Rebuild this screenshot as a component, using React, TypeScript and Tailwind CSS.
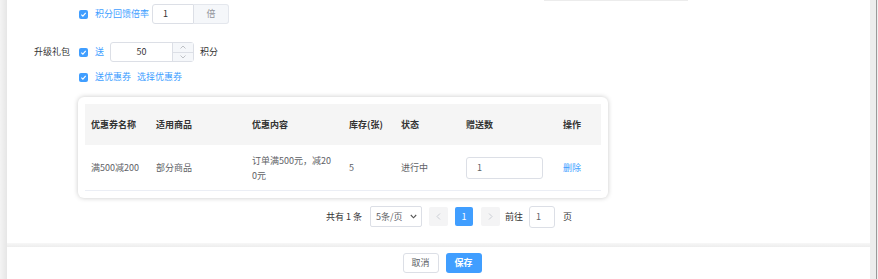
import React from "react";

const font = { fontFamily: '"Noto Sans CJK SC", "Noto Sans", sans-serif' };

const Check = () => (
  <span className="flex h-[9px] w-[9px] items-center justify-center rounded-[2px] bg-[#409eff]">
    <svg width="7" height="7" viewBox="0 0 8 8">
      <path d="M1.5 4.2 L3.3 5.9 L6.5 2.2" fill="none" stroke="#fff" strokeWidth="1.3" />
    </svg>
  </span>
);

const cols = "grid grid-cols-[71px_96px_97px_52px_65px_97px_38px]";

const App: React.FC = () => {
  return (
    <div className="flex h-[279px] w-[878px] bg-white text-[9px] text-[#606266]" style={font}>
      <div className="w-[7px] bg-gradient-to-r from-[#f4f4f4] to-[#e6e6e6]" />
      <div className="flex flex-1 flex-col">
        <div className="relative h-[243px]">
          <div className="absolute left-[537px] top-0 h-px w-[144px] bg-[#ececec]" />
          {/* 积分回馈倍率 */}
          <div className="mt-[4px] flex h-[20px] items-center">
            <div className="w-[72px]" />
            <Check />
            <span className="ml-[7px] text-[#409eff]">积分回馈倍率</span>
            <div className="ml-[3px] flex h-[20px]">
              <div className="flex w-[42px] items-center rounded-l-[3px] border border-[#dcdfe6] pl-[10px] text-[#333]">1</div>
              <div className="flex w-[35px] items-center justify-center rounded-r-[3px] border border-l-0 border-[#e4e7ed] bg-[#f5f7fa] text-[#909399]">倍</div>
            </div>
          </div>
          {/* 升级礼包 */}
          <div className="mt-[18px] flex h-[20px] items-center">
            <div className="w-[63px] text-right text-[#333]">升级礼包</div>
            <div className="w-[9px]" />
            <Check />
            <span className="ml-[7px] text-[#409eff]">送</span>
            <div className="ml-[6px] flex h-[20px] w-[84px] rounded-[3px] border border-[#dcdfe6]">
              <div className="flex flex-1 items-center justify-center text-[#333]">50</div>
              <div className="flex w-[21px] flex-col border-l border-[#dcdfe6] bg-[#f5f7fa]">
                <div className="flex flex-1 items-center justify-center border-b border-[#dcdfe6]">
                  <svg width="6" height="4" viewBox="0 0 6 4"><path d="M0.5 3.5 L3 1 L5.5 3.5" fill="none" stroke="#b0b3b8" strokeWidth="0.8" /></svg>
                </div>
                <div className="flex flex-1 items-center justify-center">
                  <svg width="6" height="4" viewBox="0 0 6 4"><path d="M0.5 0.5 L3 3 L5.5 0.5" fill="none" stroke="#b0b3b8" strokeWidth="0.8" /></svg>
                </div>
              </div>
            </div>
            <span className="ml-[6px] text-[#333]">积分</span>
          </div>
          {/* 送优惠券 */}
          <div className="mt-[5px] flex h-[20px] items-center">
            <div className="w-[72px]" />
            <Check />
            <span className="ml-[7px] text-[#409eff]">送优惠券</span>
            <span className="ml-[6px] text-[#409eff]">选择优惠券</span>
          </div>
          {/* 优惠券表格 */}
          <div className="ml-[71px] mt-[10px] w-[530px] rounded-[6px] bg-white p-[7px] shadow-[0_0_5px_rgba(0,0,0,0.22)]">
            <div className={`${cols} h-[41px] items-center bg-[#f5f5f5] font-bold text-[#333]`}>
              <div className="pl-[6px]">优惠券名称</div>
              <div>适用商品</div>
              <div>优惠内容</div>
              <div>库存(张)</div>
              <div>状态</div>
              <div>赠送数</div>
              <div>操作</div>
            </div>
            <div className={`${cols} h-[46px] items-center border-b border-[#ebeef5] text-[#606266]`}>
              <div className="pl-[6px]">满500减200</div>
              <div>部分商品</div>
              <div className="w-[80px] break-all leading-[15px]">订单满500元，减200元</div>
              <div>5</div>
              <div>进行中</div>
              <div>
                <div className="flex h-[22px] w-[77px] items-center rounded-[3px] border border-[#dcdfe6] pl-[10px]">1</div>
              </div>
              <div className="text-[#409eff]">删除</div>
            </div>
          </div>
          {/* 分页 */}
          <div className="mt-[8px] flex h-[21px] items-center text-[#333]">
            <div className="w-[319px]" />
            <span>共有 1 条</span>
            <div className="ml-[8px] flex h-[21px] w-[52px] items-center justify-between rounded-[2px] border border-[#dcdfe6] pl-[5px] pr-[4px] text-[#606266]">
              <span>5条/页</span>
              <svg width="7" height="5" viewBox="0 0 7 5"><path d="M0.8 1 L3.5 3.8 L6.2 1" fill="none" stroke="#555" strokeWidth="1.1" /></svg>
            </div>
            <div className="ml-[7px] flex h-[19px] w-[19px] items-center justify-center rounded-[2px] bg-[#f4f4f5]">
              <svg width="5" height="7" viewBox="0 0 5 7"><path d="M4 0.5 L1 3.5 L4 6.5" fill="none" stroke="#c0c4cc" strokeWidth="0.8" /></svg>
            </div>
            <div className="ml-[7px] flex h-[19px] w-[18px] items-center justify-center rounded-[2px] bg-[#409eff] text-white">1</div>
            <div className="ml-[8px] flex h-[19px] w-[19px] items-center justify-center rounded-[2px] bg-[#f4f4f5]">
              <svg width="5" height="7" viewBox="0 0 5 7"><path d="M1 0.5 L4 3.5 L1 6.5" fill="none" stroke="#c0c4cc" strokeWidth="0.8" /></svg>
            </div>
            <span className="ml-[5px]">前往</span>
            <div className="ml-[6px] flex h-[22px] w-[26px] items-center rounded-[3px] border border-[#dcdfe6] pl-[6px] text-[#606266]">1</div>
            <span className="ml-[8px]">页</span>
          </div>
        </div>
        <div className="h-[4px] bg-gradient-to-b from-[#f7f7f7] to-[#ededed]" />
        <div className="flex h-[32px] items-center justify-center gap-[7px] pl-[7px]">
          <div className="flex h-[20px] w-[36px] items-center justify-center rounded-[3px] border border-[#dcdfe6] text-[#606266]">取消</div>
          <div className="flex h-[20px] w-[36px] items-center justify-center rounded-[3px] bg-[#409eff] font-bold text-white">保存</div>
        </div>
      </div>
      <div className="flex w-[8px]">
        <div className="w-[6px] bg-[#ededed]" />
        <div className="w-[1px] bg-[#9a9a9a]" />
        <div className="w-[1px] bg-[#f0f0f0]" />
      </div>
    </div>
  );
};

export default App;
